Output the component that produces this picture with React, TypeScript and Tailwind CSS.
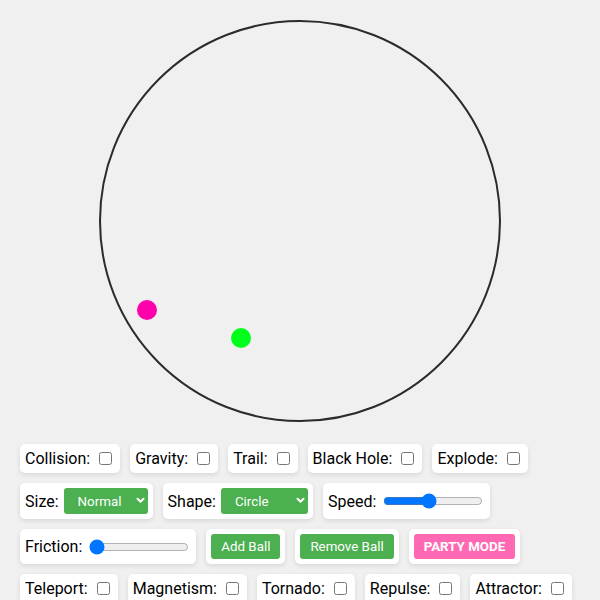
import { useState } from "react";

type Toggle = { label: string; key: string };

const firstRow: Toggle[] = [
  { label: "Collision:", key: "collision" },
  { label: "Gravity:", key: "gravity" },
  { label: "Trail:", key: "trail" },
  { label: "Black Hole:", key: "blackHole" },
  { label: "Explode:", key: "explode" },
];

const lastRow: Toggle[] = [
  { label: "Teleport:", key: "teleport" },
  { label: "Magnetism:", key: "magnetism" },
  { label: "Tornado:", key: "tornado" },
  { label: "Repulse:", key: "repulse" },
  { label: "Attractor:", key: "attractor" },
];

// ball positions inside the arena (px from its inner top-left)
const balls = [
  { id: 1, x: 46, y: 288, color: "#ff00aa" },
  { id: 2, x: 140, y: 316, color: "#00ff1a" },
];

function Control({ children }: { children: React.ReactNode }) {
  return (
    <div className="flex items-center rounded-[5px] bg-white p-[5px] shadow-[0_2px_5px_rgba(0,0,0,0.1)]">
      {children}
    </div>
  );
}

function CheckControl({ item }: { item: Toggle }) {
  return (
    <Control>
      <label htmlFor={item.key} className="mr-[5px]">
        {item.label}
      </label>
      <input id={item.key} type="checkbox" className="ml-[4px] mr-[3px] h-[13px] w-[13px]" />
    </Control>
  );
}

function GreenSelect({ value, options, width }: { value: string; options: string[]; width: string }) {
  const [current, setCurrent] = useState(value);
  return (
    <div className={`relative ${width}`}>
      <select
        value={current}
        onChange={(e) => setCurrent(e.target.value)}
        className="h-[26px] w-full appearance-none rounded-[3px] bg-[#4caf50] pl-[14px] text-[13.33px] text-white outline-none"
      >
        {options.map((o) => (
          <option key={o} value={o} className="text-black">
            {o}
          </option>
        ))}
      </select>
      <svg
        className="pointer-events-none absolute right-[3px] top-[9px]"
        width="9"
        height="7"
        viewBox="0 0 9 7"
        fill="none"
        stroke="white"
        strokeWidth="2"
        strokeLinecap="round"
        strokeLinejoin="round"
      >
        <path d="M1.5 1.8 4.5 4.8 7.5 1.8" />
      </svg>
    </div>
  );
}

export default function App() {
  const [speed, setSpeed] = useState(5);
  const [friction, setFriction] = useState(0);

  return (
    <div className="min-h-screen bg-[#f0f0f0] pt-5 font-['Roboto','Liberation_Sans',sans-serif] text-[16px] leading-[normal] text-black">
      <div className="relative mx-auto h-[402px] w-[402px] rounded-full border-2 border-[#2b2b2b]">
        {balls.map((b) => (
          <div
            key={b.id}
            className="absolute h-[20px] w-[20px] -translate-x-1/2 -translate-y-1/2 rounded-full"
            style={{ left: b.x, top: b.y, backgroundColor: b.color }}
          />
        ))}
      </div>

      <div className="flex flex-wrap gap-[10px] px-5 pt-[22px]">
        {firstRow.map((item) => (
          <CheckControl key={item.key} item={item} />
        ))}

        <Control>
          <span className="mr-[5px]">Size:</span>
          <GreenSelect value="Normal" options={["Small", "Normal", "Large"]} width="w-[84px]" />
        </Control>
        <Control>
          <span className="mr-[5px]">Shape:</span>
          <GreenSelect value="Circle" options={["Circle", "Square", "Triangle"]} width="w-[87px]" />
        </Control>
        <Control>
          <span className="mr-[5px]">Speed:</span>
          <input
            type="range"
            min={1}
            max={10}
            value={speed}
            onChange={(e) => setSpeed(Number(e.target.value))}
            className="mx-[2px] w-[100px]"
          />
        </Control>

        <Control>
          <span className="mr-[5px]">Friction:</span>
          <input
            type="range"
            min={0}
            max={10}
            value={friction}
            onChange={(e) => setFriction(Number(e.target.value))}
            className="mx-[2px] w-[100px]"
          />
        </Control>
        <Control>
          <button className="h-[25px] rounded-[3px] bg-[#4caf50] px-[10px] text-[13.33px] text-white">
            Add Ball
          </button>
        </Control>
        <Control>
          <button className="h-[25px] rounded-[3px] bg-[#4caf50] px-[10px] text-[13.33px] text-white">
            Remove Ball
          </button>
        </Control>
        <Control>
          <button className="h-[25px] rounded-[3px] bg-[#ff69b4] px-[10px] text-[13.33px] font-bold text-white">
            PARTY MODE
          </button>
        </Control>

        {lastRow.map((item) => (
          <CheckControl key={item.key} item={item} />
        ))}
      </div>
    </div>
  );
}
